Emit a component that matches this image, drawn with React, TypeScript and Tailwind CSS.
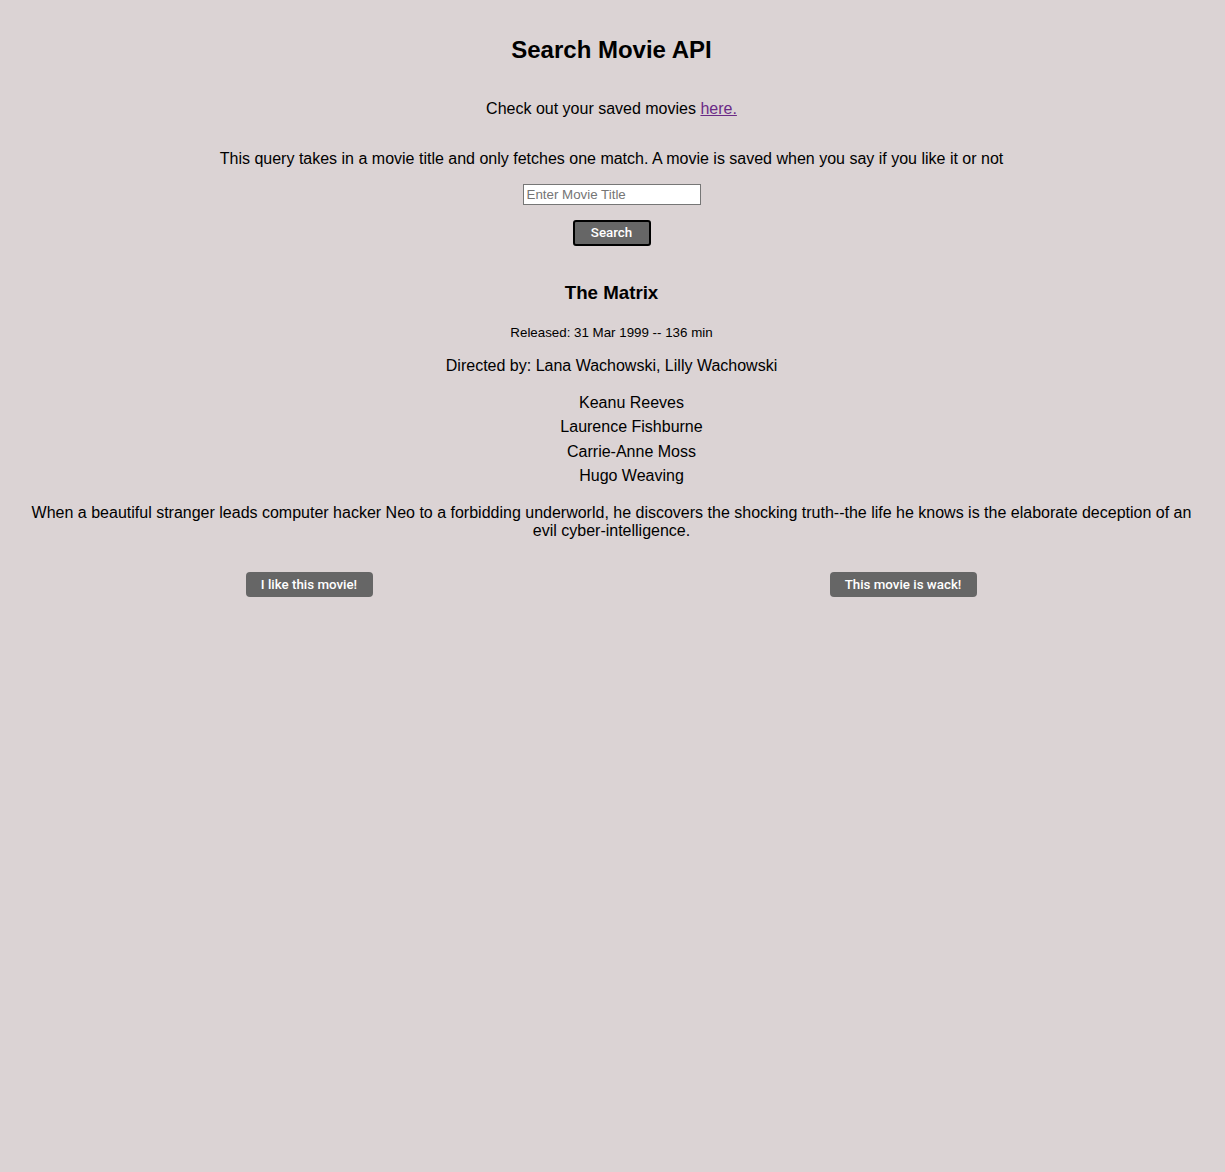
import React from "react";

const cast = ["Keanu Reeves", "Laurence Fishburne", "Carrie-Anne Moss", "Hugo Weaving"];

export default function App() {
  return (
    <div className="min-h-[1172px] w-full bg-[#dbd3d4] font-['Liberation_Sans',Arial,sans-serif] text-black">
      <div className="flex flex-col items-center pt-[36px] pr-[2px]">
        <h1 className="text-[24px] font-bold leading-[28px]">Search Movie API</h1>

        <p className="mt-[36px] text-[16px] leading-[18px]">
          Check out your saved movies{" "}
          <a href="#" className="text-[#6a2a86] underline">
            here.
          </a>
        </p>

        <p className="mt-[32px] text-[16px] leading-[18px]">
          This query takes in a movie title and only fetches one match. A movie is saved when you say if you like it or not
        </p>

        <input
          type="text"
          placeholder="Enter Movie Title"
          className="mt-[16px] h-[21px] w-[178px] border border-[#767676] bg-white px-[3px] text-[13.33px] outline-none placeholder:text-[#757575]"
        />

        <button className="mt-[15px] h-[26px] w-[78px] rounded-[3px] border-2 border-black bg-[#666666] font-['Roboto',sans-serif] text-[13.33px] font-medium text-white">
          Search
        </button>

        {/* movie result */}
        <h3 className="mt-[36px] text-[18.72px] font-bold leading-[22px]">The Matrix</h3>
        <p className="mt-[21px] text-[13.33px] leading-[15px]">Released: 31 Mar 1999 -- 136 min</p>
        <p className="mt-[17px] text-[16px] leading-[18px]">Directed by: Lana Wachowski, Lilly Wachowski</p>

        <ul className="mt-[16px] pl-[40px] text-center text-[16px] leading-[24.3px]">
          {cast.map((name) => (
            <li key={name}>{name}</li>
          ))}
        </ul>

        <p className="mt-[16px] px-[30px] text-center text-[16px] leading-[18px]">
          When a beautiful stranger leads computer hacker Neo to a forbidding underworld, he discovers the shocking truth--the life he knows is the elaborate deception of an evil cyber-intelligence.
        </p>
      </div>

      <div className="mt-[32px] grid grid-cols-[594px_594px] pl-[12px]">
        <div className="flex justify-center">
          <button className="h-[25px] w-[127px] rounded-[4px] bg-[#666666] font-['Roboto',sans-serif] text-[13.33px] font-medium text-white">
            I like this movie!
          </button>
        </div>
        <div className="flex justify-center">
          <button className="h-[25px] w-[147px] rounded-[4px] bg-[#666666] font-['Roboto',sans-serif] text-[13.33px] font-medium text-white">
            This movie is wack!
          </button>
        </div>
      </div>
    </div>
  );
}
